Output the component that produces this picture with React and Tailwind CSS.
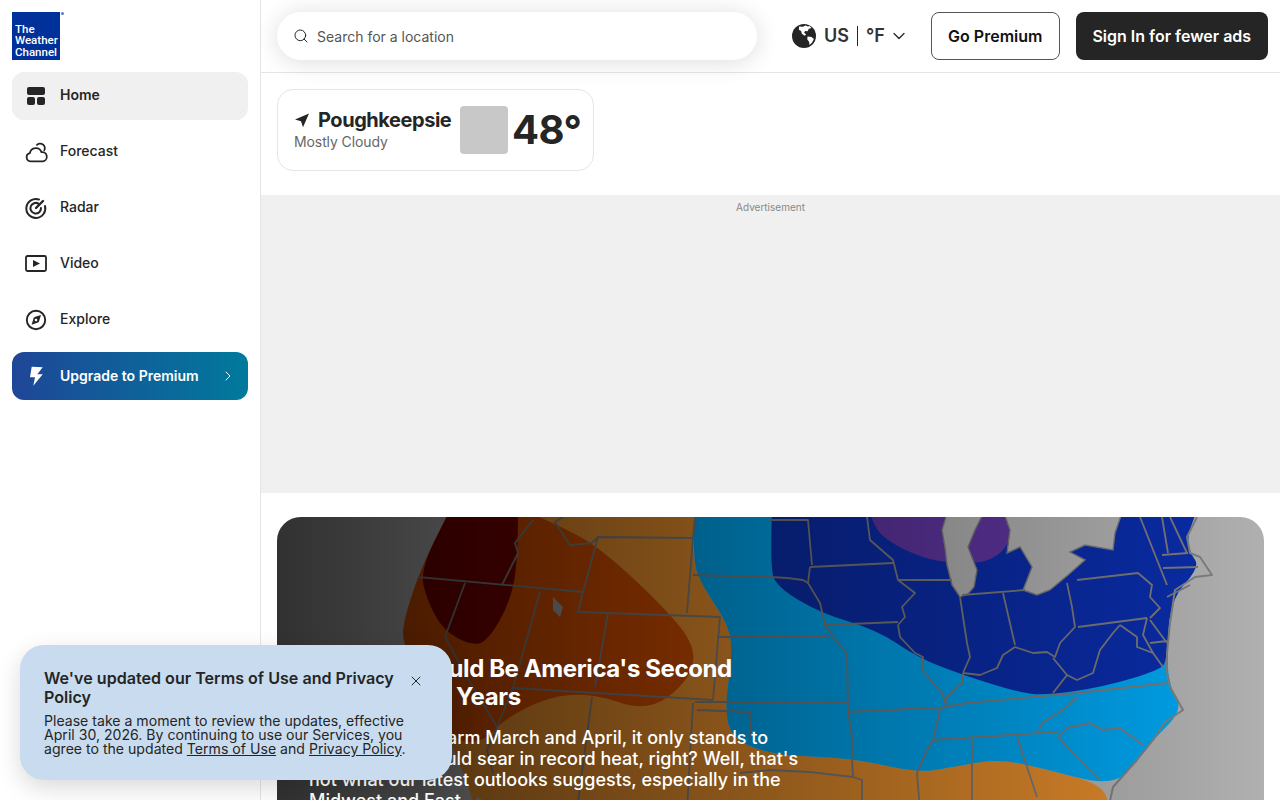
import { ChevronDown, ChevronRight, Search, X } from "lucide-react";

const FONT = "font-['Inter','Noto_Sans',sans-serif]";

// path through the points, with rounded corners between them
function smooth(points, close = true) {
  let d = `M${points[0][0]} ${points[0][1]}`;
  for (let i = 1; i < points.length - 1; i++) {
    const [x, y] = points[i];
    const [nx, ny] = points[i + 1];
    d += ` Q${x} ${y} ${(x + nx) / 2} ${(y + ny) / 2}`;
  }
  const last = points[points.length - 1];
  d += ` L${last[0]} ${last[1]}`;
  return close ? d + " Z" : d;
}

const ORANGE = [[450, 510], [450, 517], [420, 570], [403, 623], [403, 643], [420, 680], [450, 740], [470, 790], [480, 830], [1100, 830], [1113, 787], [1037, 767], [997, 759], [953, 767], [917, 773], [853, 758], [770, 755], [730, 737], [725, 703], [732, 660], [730, 627], [703, 587], [692, 560], [695, 510]];
const LIGHT_BLUE = [[695, 510], [692, 560], [703, 587], [730, 627], [732, 660], [725, 703], [730, 737], [770, 755], [853, 758], [917, 773], [953, 767], [997, 759], [1037, 767], [1113, 787], [1137, 760], [1153, 740], [1183, 710], [1170, 687], [1167, 660], [1170, 600], [1200, 567], [1190, 553], [1187, 537], [1197, 510]];
const DARK_BLUE = [[772, 510], [770, 567], [777, 587], [820, 613], [877, 630], [917, 657], [957, 673], [1020, 693], [1047, 695], [1103, 687], [1160, 670], [1167, 660], [1170, 600], [1200, 567], [1190, 553], [1187, 537], [1197, 510]];
const PURPLE = [[870, 510], [873, 530], [903, 550], [937, 562], [980, 564], [1003, 553], [1012, 533], [1003, 510]];
const RED = [[523, 510], [563, 527], [603, 550], [670, 613], [697, 650], [687, 683], [647, 712], [593, 693], [547, 697], [503, 720], [483, 743], [450, 740], [420, 680], [403, 643], [403, 623], [420, 570], [450, 510]];
const MAROON = [[518, 510], [518, 560], [510, 603], [487, 642], [470, 645], [443, 630], [427, 600], [420, 570], [450, 510]];

const LAKES = [
  "948,510 942,530 945,548 947,565 952,585 960,597 968,594 974,587 977,570 968,547 975,530 985,510",
  "1003,510 1010,530 1007,553 1020,547 1032,567 1027,580 1023,590 1037,595 1050,590 1068,575 1085,560 1070,552 1085,545 1113,550 1115,533 1123,510",
];

const STATE_LINES = [
  "770,520 808,520 812,565", "810,567 893,563", "867,517 870,540 893,560 898,580 915,593 902,607 905,617 898,625",
  "898,580 952,580", "810,567 808,583 820,603 825,625", "770,577 787,578 803,580 808,583", "825,625 898,622",
  "898,625 900,637 915,653 923,657 922,670 942,693 947,707", "825,625 838,643 847,653 848,712 852,737 852,758 853,777 862,780 862,810",
  "770,637 830,637", "770,702 847,702", "848,712 930,708 940,710", "940,708 967,703 1077,693 1167,683",
  "940,710 933,740 927,750 917,773 920,810", "933,740 1057,732", "972,740 972,810", "1017,737 1037,797",
  "1077,697 1063,710 1042,723 1038,732", "1058,737 1067,728 1090,723 1103,730 1120,728 1143,745", "1058,737 1077,757 1100,780",
  "960,597 967,643 970,657 963,673", "963,673 962,683 947,697 947,707", "962,595 1025,590", "1003,593 1015,645",
  "963,673 980,675 997,668 1003,655 1015,647 1033,653 1047,652 1055,657 1060,643 1075,627 1072,607 1067,583",
  "1053,658 1067,675 1053,693", "1067,675 1077,680 1093,673 1100,650 1113,633 1120,625", "1078,627 1147,618",
  "1077,580 1138,573 1152,585 1150,597 1160,608 1150,618", "1140,517 1167,585", "1162,517 1168,553", "1170,517 1187,553",
  "1162,555 1188,553", "1163,568 1198,567", "1167,597 1190,585", "1147,618 1143,635 1153,653 1163,667", "1150,620 1167,643", "1150,643 1167,641",
  "1120,625 1137,637 1137,647 1153,653",
  "418,577 583,592", "465,583 445,637 467,677 497,727", "533,520 515,543 518,553 502,585", "540,592 513,688 713,700",
  "583,592 598,537 693,538", "598,537 592,543 570,545 555,522 563,517", "583,592 578,612 720,617 713,700", "608,613 595,687",
  "693,538 687,613", "693,575 770,577", "717,637 770,637", "695,702 770,702", "697,710 750,712 750,737", "693,703 687,810",
  "592,697 577,810", "513,688 497,727 487,750 493,773", "695,517 693,538",
  "853,777 810,772 770,770 740,773",
];
const COAST = "1197,517 1187,537 1190,553 1200,557 1212,575 1195,577 1175,590 1170,623 1167,653 1167,673 1170,687 1183,710 1165,722 1153,740 1137,760 1113,787 1108,810";

function Map() {
  return (
    <svg viewBox="277 517 987 400" className="block w-full h-[400px]" preserveAspectRatio="none">
      <rect x="277" y="517" width="987" height="400" fill="#b0b0b0" />
      <path d={smooth(ORANGE)} fill="#e08a2b" />
      <path d={smooth(LIGHT_BLUE)} fill="#00a4ee" />
      <path d={smooth(DARK_BLUE)} fill="#0a2ca8" />
      <path d={smooth(PURPLE)} fill="#5e35a0" />
      <path d={smooth(RED)} fill="#c94a00" />
      <path d={smooth(MAROON)} fill="#720000" />
      {LAKES.map((pts) => (
        <polygon key={pts} points={pts} fill="#b0b0b0" stroke="#7a7a7a" strokeWidth="1.4" />
      ))}
      <polygon points="553,597 563,607 560,617 553,610" fill="#999" />
      <polygon points="477,797 492,805 470,812" fill="#b0b0b0" />
      {STATE_LINES.map((pts) => (
        <polyline key={pts} points={pts} fill="none" stroke="#7a7a7a" strokeWidth="1.8" strokeLinejoin="round" />
      ))}
      <polyline points={COAST} fill="none" stroke="#808080" strokeWidth="2" strokeLinejoin="round" />
    </svg>
  );
}

function HomeIcon() {
  return (
    <svg width="24" height="24" viewBox="0 0 24 24" fill="#252525">
      <rect x="3" y="3" width="18" height="8" rx="2" />
      <rect x="3" y="13" width="8" height="8" rx="2" />
      <rect x="13" y="13" width="8" height="8" rx="2" />
    </svg>
  );
}

function ForecastIcon() {
  return (
    <svg width="24" height="24" viewBox="0 0 24 24" fill="none" stroke="#252525" strokeWidth="1.8" strokeLinejoin="round">
      <path d="M6.5 21.3a4.1 4.1 0 0 1-.6-8.1 6 6 0 0 1 11.6-1 4.6 4.6 0 0 1 1.4 9.1z" />
      <path d="M12.4 5.5a4.6 4.6 0 1 1 7.6 5.4" />
    </svg>
  );
}

function RadarIcon() {
  return (
    <svg width="24" height="24" viewBox="0 0 24 24" fill="none" stroke="#252525" strokeWidth="2" strokeLinecap="round">
      <path d="M15 3.5A9.5 9.5 0 1 0 21 10" />
      <path d="M14.5 7.7A5.3 5.3 0 1 0 17 12" />
      <path d="M12 12l7-7" strokeWidth="2.4" />
    </svg>
  );
}

function VideoIcon() {
  return (
    <svg width="24" height="24" viewBox="0 0 24 24" fill="none">
      <rect x="2" y="4" width="20" height="15" rx="1.5" stroke="#252525" strokeWidth="1.8" />
      <path d="M9 8l7 3.5L9 15z" fill="#252525" />
    </svg>
  );
}

function ExploreIcon() {
  return (
    <svg width="24" height="24" viewBox="0 0 24 24" fill="none">
      <circle cx="12" cy="12" r="9.2" stroke="#252525" strokeWidth="1.9" />
      <path d="M17 7l-2 6.6-1 1-6.4 2.1 2-6.4 1-1.2z" fill="#252525" />
      <circle cx="12" cy="12" r="1.3" fill="#fff" />
    </svg>
  );
}

function BoltIcon() {
  return (
    <svg width="24" height="24" viewBox="0 0 24 24" fill="#fff">
      <path d="M7.7 2.7l11 .6-5.4 7h5.4L9.3 21.7l1.7-8.4H6z" />
    </svg>
  );
}

function GlobeIcon() {
  return (
    <svg width="24" height="24" viewBox="0 0 24 24">
      <circle cx="12" cy="12" r="12" fill="#252525" />
      <path d="M7 2.5l4 .3 2.4-1.3 2.6 1 1.5-.4 2 2-2.6.6-1.4 2.6-2.4-.4-1 1.8 2 1.8-1.4 1.2-2.8-2-.8-2.6-2.2-1.4z" fill="#fff" />
      <path d="M15.5 12.5l4 .6 2.4 2-1.8 3.4-2.6 2.6-.4-3.4-1.8-2.2z" fill="#fff" />
    </svg>
  );
}

function LocationArrow() {
  return (
    <svg width="16" height="16" viewBox="0 0 16 16" fill="#252525" className="shrink-0">
      <path d="M15 1.5L1 7.4l6 1.8 2 6z" />
    </svg>
  );
}

const NAV_ITEMS = [
  { label: "Home", icon: HomeIcon, active: true },
  { label: "Forecast", icon: ForecastIcon },
  { label: "Radar", icon: RadarIcon },
  { label: "Video", icon: VideoIcon },
  { label: "Explore", icon: ExploreIcon },
];

function Sidebar() {
  return (
    <aside className="w-[261px] shrink-0 border-r border-[#e5e5e5] bg-white px-3 pt-3">
      <div className="relative w-12 h-12 bg-[#00309a] text-white font-['Roboto',sans-serif] font-medium text-[11.5px] leading-[11.3px] pl-[3px] pt-[12px] whitespace-nowrap">
        The<br />Weather<br />Channel
        <span className="absolute left-[49px] top-[0px] w-[3px] h-[3px] rounded-full bg-[#5a78c8]" />
      </div>
      <nav className="mt-3 flex flex-col gap-2">
        {NAV_ITEMS.map(({ label, icon: Icon, active }) => (
          <a key={label} className={`flex items-center gap-3 h-12 px-3 rounded-xl text-sm font-medium text-[#252525] ${active ? "bg-[#f0f0f0] font-semibold" : ""}`}>
            <Icon />
            <span className="-mt-[3px]">{label}</span>
          </a>
        ))}
        <a className="flex items-center gap-3 h-12 px-3 rounded-xl text-sm font-semibold text-white bg-[linear-gradient(90deg,#1f4697,#007a9c)]">
          <BoltIcon />
          <span className="flex-1">Upgrade to Premium</span>
          <ChevronRight size={16} strokeWidth={1.5} />
        </a>
      </nav>
    </aside>
  );
}

function Header() {
  return (
    <header className="h-[73px] shrink-0 border-b border-[#e5e5e5] pl-4 pr-3 flex items-center">
      <div className="w-[480px] h-12 rounded-full bg-white shadow-[0_2px_24px_rgba(0,0,0,0.14)] flex items-center gap-2 pl-4 text-[#555] text-sm">
        <Search size={16} strokeWidth={1.5} className="text-[#252525]" />
        <span className="mt-px">Search for a location</span>
      </div>
      <div className="ml-[35px] flex items-center text-[#252525]">
        <GlobeIcon />
        <span className="ml-2 text-lg font-semibold text-[#333]">US</span>
        <span className="mx-2 w-px h-5 bg-[#252525]" />
        <span className="text-lg font-semibold text-[#333]">°F</span>
        <ChevronDown size={20} strokeWidth={1.5} className="ml-1" />
      </div>
      <button className="ml-[22px] w-[129px] h-12 rounded-lg border border-[#555] bg-white text-base font-semibold text-[#111]">Go Premium</button>
      <button className="ml-4 w-[192px] h-12 rounded-lg bg-[#252525] text-base font-semibold text-white">Sign In for fewer ads</button>
    </header>
  );
}

function WeatherCard() {
  return (
    <div className="mt-4 ml-4 w-[317px] h-[82px] shrink-0 rounded-2xl border border-[#e5e5e5] bg-white flex items-center pl-4">
      <div className="w-[158px] shrink-0">
        <div className="flex items-center gap-2 text-xl leading-6 font-bold tracking-[-0.45px] text-[#252525] whitespace-nowrap">
          <LocationArrow />
          <span>Poughkeepsie</span>
        </div>
        <div className="text-sm leading-5 tracking-[-0.1px] text-[#666]">Mostly Cloudy</div>
      </div>
      <div className="ml-[8px] w-12 h-12 rounded-sm bg-[#c8c8c8]" />
      <span className="ml-1 text-[40px] leading-none font-bold tracking-[-0.6px] text-[#252525]">48°</span>
    </div>
  );
}

function Story() {
  return (
    <div className="relative mt-6 ml-4 mr-4 shrink-0 rounded-3xl overflow-hidden">
      <Map />
      <div className="absolute inset-0 bg-[linear-gradient(90deg,rgba(0,0,0,0.72),rgba(0,0,0,0)_100%)]" />
      <div className="absolute left-8 top-[138px] w-[500px] text-white">
        <h2 className="text-2xl leading-7 font-bold tracking-[-0.4px]"><span className="tracking-normal pr-1">Summer</span> Could Be America's Second <span className="tracking-[-0.8px]">Coolest</span> In 10 Years</h2>
        <p className="mt-[16px] text-lg leading-[21px] font-medium">After a record warm March and April, it only stands to reason June would sear in record heat, right? Well, that's not what our latest outlooks suggests, especially in the Midwest and East.</p>
      </div>
    </div>
  );
}

function TermsNotice() {
  return (
    <div className="absolute left-5 top-[645px] w-[432px] h-[135px] rounded-3xl bg-[#c9dcef] pl-6 pr-[28px] pt-6 shadow-[0_8px_24px_rgba(0,0,0,0.15)] text-[#252525]">
      <div className="flex items-start gap-3">
        <p className="flex-1 text-[16.1px] leading-[19px] font-semibold">We've updated our Terms of Use and Privacy Policy</p>
        <X size={16} strokeWidth={1.5} className="shrink-0 mt-1" />
      </div>
      <p className="mt-[7px] text-[14.1px] leading-[14px]">
        Please take a moment to review the updates, effective April 30, 2026. By continuing to use our Services, you agree to the updated <span className="underline">Terms of Use</span> and <span className="underline">Privacy Policy</span>.
      </p>
    </div>
  );
}

export default function App() {
  return (
    <div className={`relative flex h-screen overflow-hidden bg-white ${FONT}`}>
      <Sidebar />
      <main className="flex-1 min-w-0 flex flex-col">
        <Header />
        <WeatherCard />
        <div className="mt-6 h-[298px] shrink-0 bg-[#f0f0f0] text-center text-[10px] leading-6 text-[#888]">Advertisement</div>
        <Story />
      </main>
      <TermsNotice />
    </div>
  );
}
